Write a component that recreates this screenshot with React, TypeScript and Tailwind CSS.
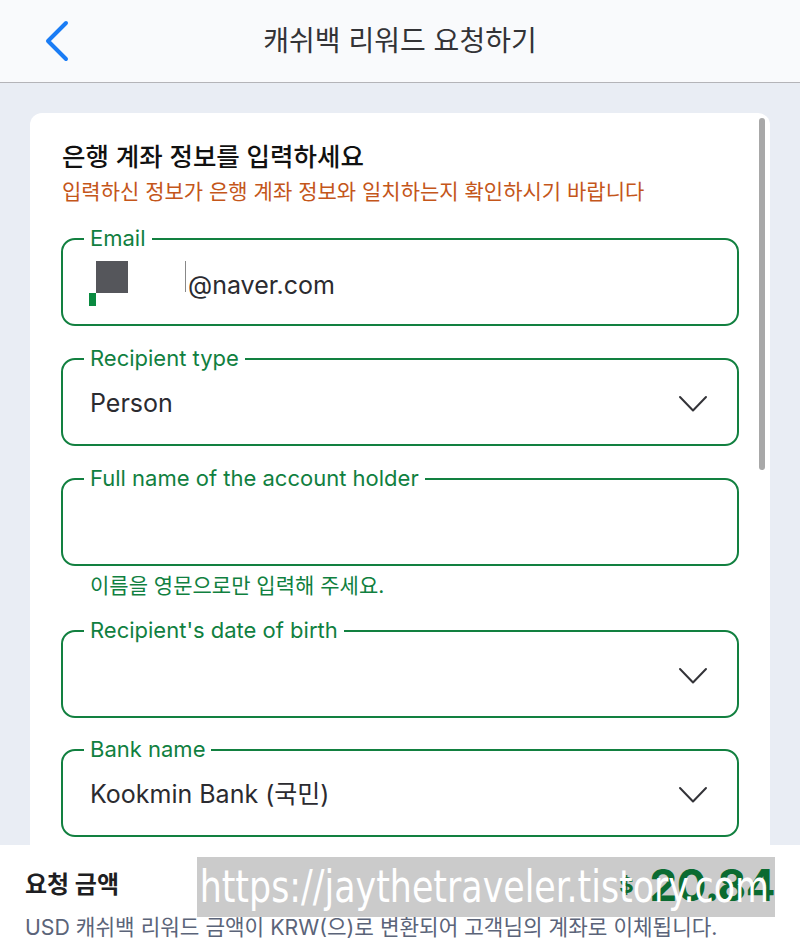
const font = { fontFamily: '"Inter", "Noto Sans CJK KR", sans-serif' };

const Chevron = () => (
  <svg width="30" height="18" viewBox="0 0 30 18" fill="none" className="shrink-0 mt-[3px]">
    <polyline points="2,2 15,15.5 28,2" stroke="#333338" strokeWidth="2" strokeLinecap="round" strokeLinejoin="round" />
  </svg>
);

type FieldProps = {
  label: string;
  children?: React.ReactNode;
  select?: boolean;
};

const Field = ({ label, children, select }: FieldProps) => (
  <div className="relative h-[88px] border-2 border-[#128040] rounded-[14px] flex items-center pl-[27px] pr-[29px]">
    <span className="absolute -top-[15px] left-[21px] px-[6px] bg-white text-[#108040] text-[22px] leading-[26px]">
      {label}
    </span>
    <div className="flex-1 text-[25px] text-[#2b2b30] pt-[3px]">{children}</div>
    {select && <Chevron />}
  </div>
);

export default function App() {
  return (
    <div style={font} className="relative w-[800px] h-[942px] overflow-hidden bg-[#e9edf4] flex flex-col">
      {/* Header */}
      <header className="h-[83px] shrink-0 bg-[#f9fafc] border-b border-[#b4b4b8] flex items-center relative">
        <svg width="30" height="44" viewBox="0 0 30 44" className="ml-[41px]" fill="none">
          <polyline points="25,4 7,22 25,40" stroke="#1a7cf5" strokeWidth="4" strokeLinecap="round" strokeLinejoin="round" />
        </svg>
        <h1 className="absolute inset-x-0 text-center text-[28px] text-[#333336] top-[23px] leading-[36px]">
          캐쉬백 리워드 요청하기
        </h1>
      </header>

      {/* Scroll area */}
      <main className="flex-1 overflow-hidden px-[30px] pt-[30px]">
        <div className="relative bg-white rounded-t-[12px] px-[31px] pt-[28px] pb-[40px]">
          <div className="absolute right-[5px] top-[5px] w-[6px] h-[352px] rounded-full bg-[#a8a8a8]" />
          <h2 className="pl-[1px] text-[25.5px] font-medium text-[#111] leading-[32px]">은행 계좌 정보를 입력하세요</h2>
          <p className="pl-[1px] mt-[5px] text-[21px] text-[#c4561a] leading-[28px]">
            입력하신 정보가 은행 계좌 정보와 일치하는지 확인하시기 바랍니다
          </p>

          <div className="mt-[32px] flex flex-col">
            <Field label="Email">
              <div className="flex items-center">
                <div className="relative w-[97px] h-[46px] -ml-[1px]">
                  <div className="absolute left-[7px] top-[0px] w-[32px] h-[32px] bg-[#55565b]" />
                  <div className="absolute left-0 top-[32px] w-[7px] h-[13px] bg-[#0a8a40]" />
                  <div className="absolute right-0 top-[0px] w-[1px] h-[31px] bg-[#888]" />
                </div>
                <span className="ml-[2px] mt-[4px]">@naver.com</span>
              </div>
            </Field>
            <div className="h-[32px]" />
            <Field label="Recipient type" select>
              Person
            </Field>
            <div className="h-[32px]" />
            <Field label="Full name of the account holder" />
            <p className="pl-[29px] mt-[6px] text-[21px] text-[#108040] leading-[28px]">
              이름을 영문으로만 입력해 주세요.
            </p>
            <div className="h-[30px]" />
            <Field label="Recipient's date of birth" select />
            <div className="h-[31px]" />
            <Field label="Bank name" select>
              Kookmin Bank (국민)
            </Field>
          </div>
        </div>
      </main>

      {/* Watermark box (sits under the amount) */}
      <div className="absolute left-[197px] top-[857px] w-[578px] h-[60px] bg-[#cbcbcb] z-10" />

      {/* Footer */}
      <footer className="h-[97px] shrink-0 bg-white px-[25px] pt-[18px]">
        <div className="flex items-center justify-between h-[44px]">
          <span className="text-[24px] font-bold text-[#1e1e22]">요청 금액</span>
          <span className="relative z-20 flex items-center text-[#0b6b31] font-bold">
            <span className="text-[22px] mr-[16px]">$</span>
            <span className="text-[44px] leading-[44px] tracking-[-0.5px]">20.84</span>
          </span>
        </div>
        <p className="mt-[6px] text-[21.3px] text-[#5b6479] leading-[28px] whitespace-nowrap">
          USD 캐쉬백 리워드 금액이 KRW(으)로 변환되어 고객님의 계좌로 이체됩니다.
        </p>
      </footer>

      {/* Watermark text */}
      <div className="absolute left-[197px] top-[857px] w-[578px] h-[60px] z-30 overflow-hidden">
        <span
          className="block text-white text-[44px] leading-[60px] whitespace-nowrap pl-[3px] origin-left scale-x-[0.88]"
          style={{ fontFamily: '"Liberation Sans Narrow", "DejaVu Sans Condensed", sans-serif' }}
        >
          https://jaythetraveler.tistory.com
        </span>
      </div>
    </div>
  );
}
